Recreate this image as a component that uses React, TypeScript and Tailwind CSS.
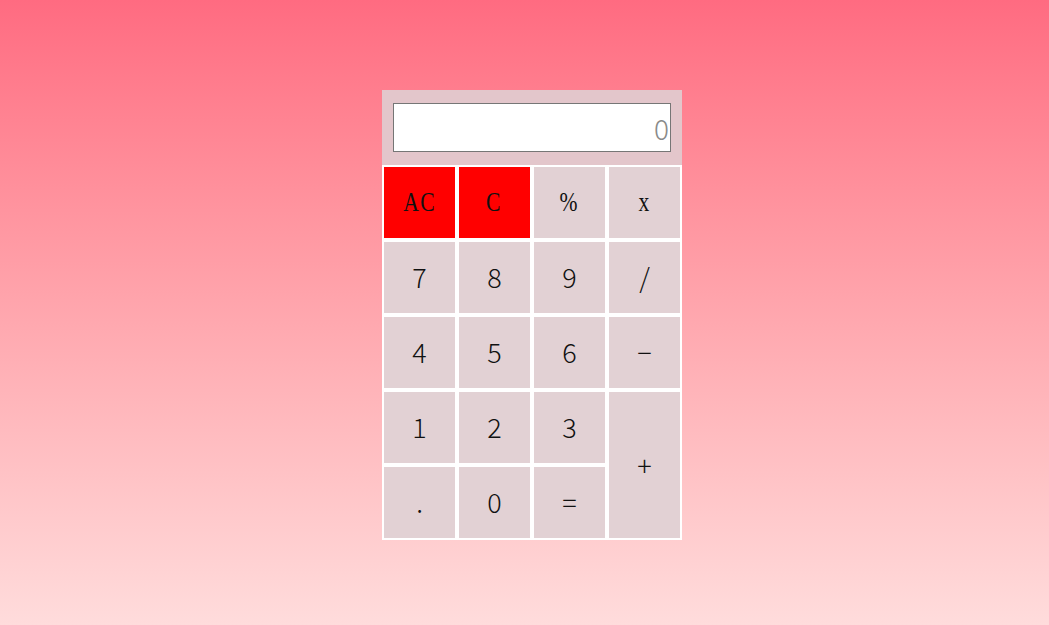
const rows: { label: string; red?: boolean; mono?: boolean; tall?: boolean }[] = [
  { label: "AC", red: true, mono: true },
  { label: "C", red: true, mono: true },
  { label: "%", mono: true },
  { label: "x", mono: true },
  { label: "7" },
  { label: "8" },
  { label: "9" },
  { label: "/" },
  { label: "4" },
  { label: "5" },
  { label: "6" },
  { label: "−" },
  { label: "1" },
  { label: "2" },
  { label: "3" },
  { label: "+", tall: true },
  { label: "." },
  { label: "0" },
  { label: "=" },
];

function Key({ label, red, mono, tall }: (typeof rows)[number]) {
  return (
    <button
      type="button"
      className={
        "flex items-center justify-center border-2 border-white text-[#111] " +
        (red ? "bg-[#ff0000] " : "bg-[#e2d1d4] ") +
        (tall ? "row-span-2 " : "") +
        (mono
          ? "font-['Liberation_Serif',serif] text-[27px]"
          : "font-['Noto_Sans_CJK_JP',sans-serif] text-[27px] font-extralight")
      }
    >
      {mono ? (
        <span className="inline-block scale-x-[0.8] tracking-[2px]">{label}</span>
      ) : (
        label
      )}
    </button>
  );
}

export default function App() {
  return (
    <div className="flex h-[625px] w-full justify-center bg-gradient-to-b from-[#ff6b81] to-[#ffdcdc] pl-[15px] pt-[90px]">
      <div className="h-fit w-[300px] bg-[#e3c6cb]">
        <div className="flex h-[75px] items-center px-[11px]">
          <input
            readOnly
            placeholder="0"
            className="h-[49px] w-full border border-[#767676] bg-white px-[1px] text-right font-['Noto_Sans_CJK_JP',sans-serif] text-[28px] font-extralight placeholder:text-[#8a8a8a]"
          />
        </div>
        <div className="grid grid-cols-4 auto-rows-[75px]">
          {rows.map((k) => (
            <Key key={k.label} {...k} />
          ))}
        </div>
      </div>
    </div>
  );
}
